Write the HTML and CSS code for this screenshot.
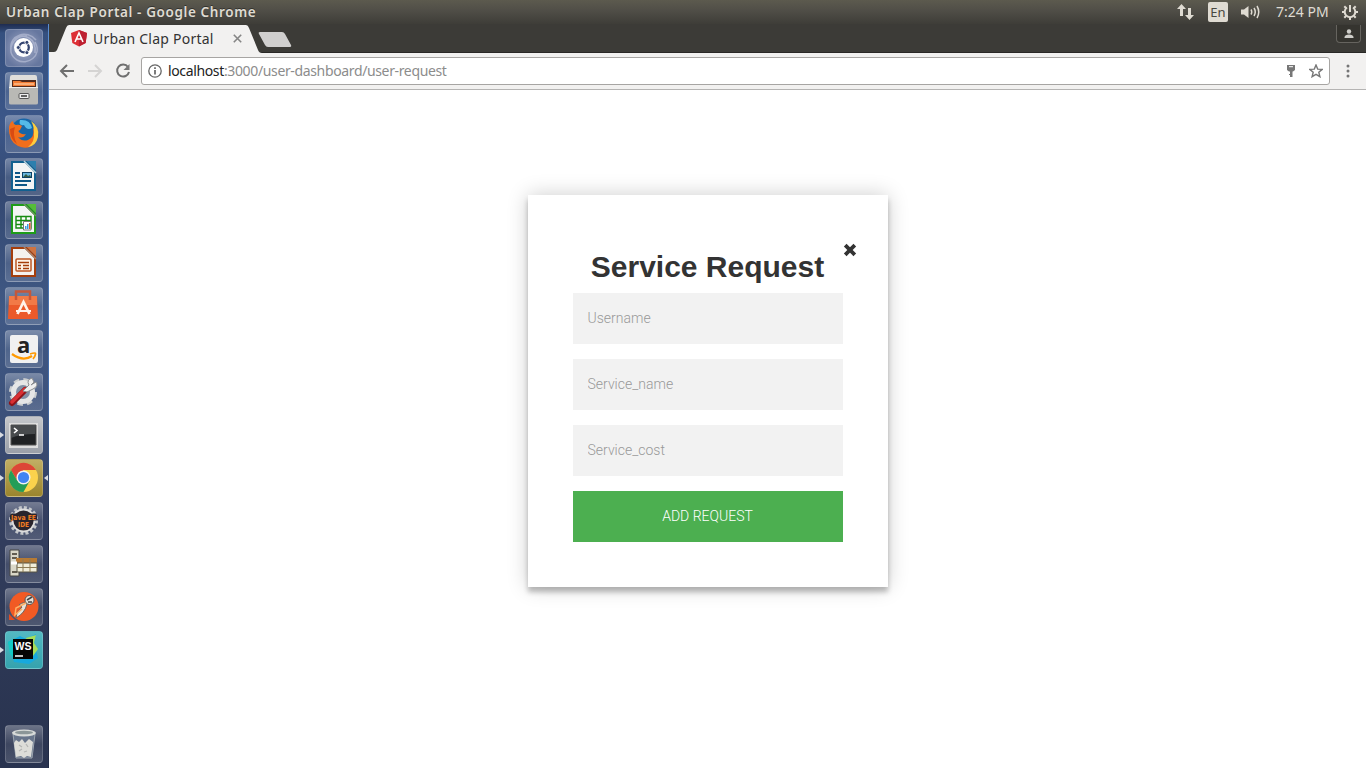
FILE: index.html
```html
<!DOCTYPE html>
<html lang="en">
<head>
<meta charset="utf-8">
<title>Urban Clap Portal</title>
<link rel="stylesheet" href="styles.css">
</head>
<body>
<div class="desktop">
  <header class="panel">
    <span class="panel-title">Urban Clap Portal - Google Chrome</span>
    <svg class="panel-icon arrows" width="20" height="18" viewBox="0 0 20 18"><path d="M5.500 1 10 6H7V13H4V6H1zM13.500 17 9 12H12V5H15V12H18z"/></svg>
    <span class="lang">En</span>
    <svg class="panel-icon sound" width="21" height="16" viewBox="0 0 21 16"><path d="M1 5.500H4L8.500 2V14L4 10.500H1z"/><path class="wave" d="M11 5.500Q12.500 8 11 10.500M14 4Q16.500 8 14 12M17 2Q20.500 8 17 14"/></svg>
    <span class="clock">7:24 PM</span>
    <svg class="panel-icon gear" width="18" height="18" viewBox="0 0 18 18"><path class="cog" d="M6 4.500A5.300 5.300 0 1 0 12 4.500"/><path class="cog" d="M9 2V9M1 9H4M14 9H17M3.300 3.300 5 5M14.700 3.300 13 5M3.300 14.700 5 13M14.700 14.700 13 13M9 14V17"/></svg>
  </header>
  <div class="workspace">
    <nav class="launcher">
      <div class="tile ubuntu"><svg viewBox="0 0 37 37"><path d="M6 20C4 6 22 0 31 11M12 31C-2 22 10 5 22 7M30 13C38 27 22 37 12 31M9 10C18 3 32 9 30 24" fill="none" stroke="#c4cbe0" stroke-width="1.500" opacity=".55"/><circle cx="18.500" cy="18.500" r="9.500" fill="#fff"/><circle cx="19" cy="18.500" r="4.800" fill="none" stroke="#344470" stroke-width="2.300"/><g fill="#344470" stroke="#fff" stroke-width=".9"><circle cx="13.300" cy="18.500" r="2"/><circle cx="21.900" cy="13.400" r="2"/><circle cx="21.900" cy="23.600" r="2"/></g></svg></div>
      <div class="tile"><svg viewBox="0 0 37 37"><path d="M5 5Q5 3 7 3H30Q32 3 32 5L33 17H4z" fill="#e0deda"/><path d="M7 8H31V15H7z" fill="#522b1d"/><path d="M8 9H15L17 10H30V14H8z" fill="#f37d35"/><path d="M9 12H29" stroke="#ffe0bc"/><path d="M4 15H33V31Q33 32.500 31 32.500H6Q4 32.500 4 31z" fill="#b9b9b5"/><path d="M4 15.500H33" stroke="#eee"/><rect x="14" y="21.500" width="10" height="5" rx="1" fill="#eee" stroke="#555"/><path d="M16 24H22" stroke="#333" stroke-width="1.500"/></svg></div>
      <div class="tile"><svg viewBox="0 0 37 37"><circle cx="19" cy="17" r="13.500" fill="#1766a8"/><path d="M15 5Q25 4 27 13Q22 16 19 10Q13 11 15 5z" fill="#55b9e7"/><path d="M4 12Q5 7 8 6Q8 9 11 10Q14 9 17 11L15 15Q12 16 15 18Q18 20 21 19Q18 24 13 22Q17 27 23 25Q30 22 28 13Q34 20 30 27Q24 36 13 31Q3 26 4 12z" fill="#f16e1b"/><path d="M26 6Q35 12 33 22Q31 31 23 32Q30 27 29 18Q29 11 26 6z" fill="#ffcc3d"/><path d="M5 14Q5 24 12 29Q7 20 10 12z" fill="#d94b12"/></svg></div>
      <div class="tile"><svg viewBox="0 0 37 37"><path d="M6 3H22L31 12V33H6z" fill="#12608f"/><path d="M8 5H20L29 14V31H8z" fill="#f4f5f5"/><path d="M22 3H31V12z" fill="#2d7fae"/><path d="M19 3 31 15" stroke="#b9d2de" stroke-width="1.500"/><path d="M10 15H15M10 19H15M10 23H26M10 27H22" stroke="#0d5787" stroke-width="2"/><rect x="17.500" y="14.500" width="9" height="5" fill="#6bb7df" stroke="#0d4265"/><path d="M18 19 21 16 23 18 25 17 26 19z" fill="#345b45"/></svg></div>
      <div class="tile"><svg viewBox="0 0 37 37"><path d="M6 3H22L31 12V33H6z" fill="#1e9c19"/><path d="M8 5H20L29 14V31H8z" fill="#f4f5f5"/><path d="M22 3H31V12z" fill="#55bd38"/><path d="M19 3 31 15" stroke="#6e9262" stroke-width="1.500"/><path d="M11 15.500H26V27H11zM11 19.500H26M11 23.500H26M16 15V27M21 15V27" fill="#fff" stroke="#168b12" stroke-width="1.400"/><path d="M18.500 20.500H26V29H18.500z" fill="#fff" stroke="#777"/><path d="M20 28V25H21.500V28M22 28V23H23.500V28" fill="#389be0"/><path d="M24 28V22H25.500V28z" fill="#e35c28"/></svg></div>
      <div class="tile"><svg viewBox="0 0 37 37"><path d="M6 3H22L31 12V33H6z" fill="#a53e0c"/><path d="M8 5H20L29 14V31H8z" fill="#f4f2ef"/><path d="M22 3H31V12z" fill="#cf7340"/><path d="M19 3 31 15" stroke="#a88672" stroke-width="1.500"/><rect x="11" y="15" width="15" height="12" rx="1" fill="#fff4e8" stroke="#bd5725" stroke-width="1.500"/><path d="M13 18.500H24M13 21.500H16M18 21.500H24M13 24.500H16M18 24.500H24" stroke="#a53e0c" stroke-width="1.700"/></svg></div>
      <div class="tile"><svg viewBox="0 0 37 37"><path d="M4 9H32L33 32H3z" fill="#eb5a2a"/><path d="M4 9H32V18H4z" fill="#f27a47"/><path d="M11 13V4.500H25V13" fill="none" stroke="#c5573a" stroke-width="2.500"/><path d="M12.500 27 18.500 15 24.500 27" fill="none" stroke="#fff2e9" stroke-width="2.700"/><path d="M11 24H26" stroke="#fff2e9" stroke-width="2"/></svg></div>
      <div class="tile"><svg viewBox="0 0 37 37"><rect x="5" y="5" width="28" height="28" rx="2" fill="#f1f1f1"/><text x="12" y="23" class="amazon">a</text><path d="M7 24Q18 32 27 26" fill="none" stroke="#ff9900" stroke-width="2.200"/><path d="M25 24Q31 22 30.500 24Q30 27 28 29" fill="none" stroke="#ff9900" stroke-width="1.700"/></svg></div>
      <div class="tile"><svg viewBox="0 0 37 37"><circle cx="18" cy="19" r="12" fill="none" stroke="#c9ccce" stroke-width="4" stroke-dasharray="5.420 4"/><circle cx="18" cy="19" r="9.500" fill="#8190a5" stroke="#e5e6e6" stroke-width="5"/><path d="M7 30 20 17" stroke="#8e1418" stroke-width="6" stroke-linecap="round"/><path d="M7 29 20 16" stroke="#d93034" stroke-width="3.500" stroke-linecap="round"/><path d="M18 18 24 12Q21 7 27 5L29 9 26 12 31 9Q34 13 28 16L22 19z" fill="#eee" stroke="#8a8d90"/></svg></div>
      <div class="tile terminal running"><svg viewBox="0 0 37 37"><path d="M4 7H33V32H4z" fill="#ddd"/><path d="M6 9H31V29H6z" fill="#202224" stroke="#555"/><path d="M6 9H31L30 18Q15 18 6 22z" fill="#484b4d"/><path d="M9 12 12 14.500 9 17M14 19H19" fill="none" stroke="#fff" stroke-width="1.600"/></svg></div>
      <div class="tile chrome running focused"><svg viewBox="0 0 37 37"><circle cx="18.500" cy="18.500" r="14.500" fill="#fbd24c"/><path d="M6 11A14.500 14.500 0 0 1 31 11H18.500L12.400 22z" fill="#dc4737"/><path d="M6 11A14.500 14.500 0 0 0 18.500 33L24.600 22H12.400z" fill="#249d58"/><circle cx="18.500" cy="18.500" r="7" fill="#f4f4f4"/><circle cx="18.500" cy="18.500" r="5.600" fill="#4184f3"/></svg></div>
      <div class="tile"><svg viewBox="0 0 37 37"><circle cx="18.500" cy="18.500" r="13" fill="none" stroke="#c3c6ca" stroke-width="3" stroke-dasharray="3 2.105"/><circle cx="18.500" cy="18.500" r="11" fill="#29242d" stroke="#ddd" stroke-width="1.800"/><rect x="5" y="11.500" width="27" height="7" rx="2" fill="#29242d"/><text x="6" y="17.500" class="java" textLength="25" lengthAdjust="spacingAndGlyphs">Java EE</text><text x="13" y="24.500" class="java" textLength="11" lengthAdjust="spacingAndGlyphs">IDE</text></svg></div>
      <div class="tile"><svg viewBox="0 0 37 37"><path d="M5 5H14V31H5z" fill="#dad8c8" stroke="#464743"/><path d="M7 9H12M7 13H12M7 27H12" stroke="#625d50" stroke-width="2"/><path d="M11 13H32V19H11z" fill="#b67a34"/><path d="M12 18H32V27H12z" fill="#f1eed9" stroke="#565343"/><path d="M12 22.500H32M18 14V27M25 14V27" stroke="#8d7c55"/><path d="M6 18H12" stroke="#fff" stroke-width="3"/></svg></div>
      <div class="tile"><svg viewBox="0 0 37 37"><circle cx="19" cy="18.500" r="14.500" fill="#f15a24"/><path d="M4 26 10 32H4z" fill="#e24b20"/><circle cx="24.500" cy="12" r="4.500" fill="#e5dfd7" stroke="#545454"/><path d="M22 12 27 9M23 14H27" stroke="#444" stroke-width="1.500"/><path d="M22 16Q20 25 11 30L12 25 17 19 14 17Q19 13 22 16z" fill="#e8e3da" stroke="#6d6560"/><path d="M21 15 11 20 10 27 17 21" fill="none" stroke="#ffb064" stroke-width="1.500"/></svg></div>
      <div class="tile webstorm running"><svg viewBox="0 0 37 37"><path d="M3 11 15 5 21 8 31 3 29 12 33 27 24 33 9 31z" fill="#17a9de"/><path d="M21 7 31 4 29 12 33 18 28 25z" fill="#a6dd58"/><path d="M3 11 11 7V30L5 23z" fill="#13c9c4"/><rect x="8" y="8" width="20" height="20" fill="#050505"/><text x="9.500" y="18.500" class="ws" textLength="17" lengthAdjust="spacingAndGlyphs">WS</text><path d="M10 25H18" stroke="#fff" stroke-width="1.500"/></svg></div>
      <div class="tile trash"><svg viewBox="0 0 37 37"><path d="M8 9H30L27 33H11z" fill="#68758b" stroke="#9da6b0"/><path d="M9 18 11 15 14 17 17 14 20 18 24 14 28 17 26 32 22 31 19 33 16 31 11 32z" fill="#ddddd8"/><path d="M14 20 17 22M14 26 17 24M21 19 23 22M19 27 22 26" fill="none" stroke="#b5b6b4" stroke-width="1.300"/><ellipse cx="19" cy="8" rx="12" ry="3.500" fill="#d7dad8"/><ellipse cx="19" cy="7.500" rx="9" ry="1.700" fill="#8b9698"/></svg></div>
    </nav>
    <section class="browser">
      <div class="tabs">
        <svg class="tab-shapes" width="250" height="29" viewBox="0 0 250 29"><path d="M0 29V28H5Q7 28 8 26L17 4Q18 1 20 1H197Q199 1 200 4L209 26Q210 29 213 29z" fill="#f2f1f0"/><path d="M211 8H233Q235 8 236 10L242 21Q243 23 240 23H219Q217 23 216 21L210 10Q209 8 211 8z" fill="#d0cfce"/></svg>
        <svg class="favicon" width="16" height="17" viewBox="0 0 16 17"><path d="M8 0 16 3 14.700 13 8 16.500 1.300 13 0 3z" fill="#dd2f36"/><path d="M8 0 16 3 14.700 13 8 16.500z" fill="#bd2031"/><path d="M4 12 8 3 12 12M5.500 9H10.500" fill="none" stroke="#fff" stroke-width="1.600"/></svg>
        <span class="tab-title">Urban Clap Portal</span>
        <svg class="tab-close" width="9" height="9" viewBox="0 0 9 9"><path d="M.8.8 8.200 8.200M8.200.8.800 8.200" stroke="#858585" stroke-width="1.600"/></svg>
        <div class="profile"><svg width="10" height="10" viewBox="0 0 10 10"><circle cx="5" cy="2.500" r="2.200" fill="#cfcec9"/><path d="M.5 9V8Q1 5.500 5 5.500T9.500 8V9z" fill="#cfcec9"/></svg></div>
      </div>
      <div class="toolbar">
        <svg class="nav-icon" width="16" height="16" viewBox="0 0 16 16"><path d="M15 8H2M8 2 2 8 8 14"/></svg>
        <svg class="nav-icon disabled" width="16" height="16" viewBox="0 0 16 16"><path d="M1 8H14M8 2 14 8 8 14"/></svg>
        <svg class="nav-icon" width="16" height="16" viewBox="0 0 16 16"><path d="M13 4A6 6 0 1 0 14 9"/><path d="M14.500 1V7H8.500z" fill="#777" stroke="none"/></svg>
        <div class="address">
          <svg width="14" height="14" viewBox="0 0 14 14"><circle cx="7" cy="7" r="6.200" fill="none" stroke="#666" stroke-width="1.300"/><path d="M7 6V10.500M7 3.300V5" stroke="#666" stroke-width="1.700"/></svg>
          <span class="url"><span class="host">localhost</span>:3000/user-dashboard/user-request</span>
          <svg class="key" width="10" height="13" viewBox="0 0 10 13"><path d="M1 0H9V5L7 6.500H6.500V12H4V10H3V9H4V6.500H3L1 5z" fill="#777"/><path d="M3 1.700H7" stroke="#fff"/></svg>
          <svg width="14" height="14" viewBox="0 0 14 14"><path d="M7 1 8.700 5.100 13.200 5.400 9.800 8.200 10.900 12.700 7 10.300 3.100 12.700 4.200 8.200.8 5.400 5.300 5.100z" fill="none" stroke="#777" stroke-width="1.400"/></svg>
        </div>
        <svg class="menu" width="4" height="14" viewBox="0 0 4 14"><g fill="#757575"><circle cx="2" cy="2" r="1.500"/><circle cx="2" cy="7" r="1.500"/><circle cx="2" cy="12" r="1.500"/></g></svg>
      </div>
      <main class="page">
        <form class="card">
          <svg class="card-close" width="14" height="14" viewBox="0 0 14 14"><path d="M2.200 2.200 11.800 11.800M11.800 2.200 2.200 11.800" stroke="#333" stroke-width="3.800"/></svg>
          <h2>Service Request</h2>
          <input type="text" placeholder="Username">
          <input type="text" placeholder="Service_name">
          <input type="text" placeholder="Service_cost">
          <button type="button">ADD REQUEST</button>
        </form>
      </main>
    </section>
  </div>
</div>
</body>
</html>
```
FILE: styles.css
```css
* { box-sizing: border-box; }
body { margin: 0; overflow: hidden; }
svg { display: block; flex: none; }
.desktop { width: 1366px; height: 768px; display: flex; flex-direction: column; font-family: "Noto Sans", sans-serif; }
.panel { height: 24px; display: flex; align-items: center; padding: 0 7px 0 6px; background: linear-gradient(#5c5a4e, #514f48 40%, #3e3d38); color: #dfdbd2; white-space: nowrap; }
.panel-title { width: 254px; font-size: 13.500px; font-weight: 600; letter-spacing: .62px; text-shadow: 0 -1px #33322e; }
.panel-icon { fill: #dfdbd2; }
.arrows { margin-left: auto; }
.lang { width: 20px; height: 20px; margin-left: 12px; border-radius: 2px; background: #dfdbd2; color: #484740; font-size: 13px; line-height: 20px; text-align: center; }
.sound { margin-left: 12px; }
.wave, .cog { fill: none; stroke: #dfdbd2; stroke-width: 1.500; }
.cog { stroke-width: 2; }
.clock { width: 53px; margin-left: 15px; padding-bottom: 2px; font-size: 14px; letter-spacing: 0; }
.gear { margin-left: 12px; }
.workspace { flex: 1; display: flex; min-height: 0; }
.launcher { width: 49px; padding: 5px 0 5px 5px; display: flex; flex-direction: column; gap: 5px; background: linear-gradient(#1e2c50 0, #35507f 9px, #3c5789 100px, #344972 170px, #405985 290px, #3b5079 400px, #343f60 480px, #2d3855 620px, #29334f 100%); border-right: 1px solid #456fae; border-image: linear-gradient(#5b8ed0, #4069a6 50%, #202a45 70%) 1; }
.tile { width: 38px; height: 38px; flex: none; position: relative; border: 1px solid #ffffff2b; border-radius: 4px; background: linear-gradient(#ffffff50, #ffffff18 50%, #ffffff28); }
.tile svg { width: 37px; height: 37px; margin: -1px; }
.ubuntu { background: radial-gradient(circle, #a4acc8, #66779f 80%); }
.terminal { background: linear-gradient(#c5c7ca, #9a9fa8); }
.chrome { background: linear-gradient(#c1ae64, #9b852d); }
.webstorm { background: linear-gradient(#53b9c2, #35a2ae); }
.trash { margin-top: auto; }
.running::before, .focused::after { content: ""; position: absolute; top: 15px; border: 3px solid transparent; }
.running::before { left: -6px; border-left: 4px solid #d9dce2; border-right: 0; }
.focused::after { right: -6px; border-right: 4px solid #d9dce2; border-left: 0; }
.amazon { font: 700 22px "Open Sans", sans-serif; fill: #222; }
.java { font: 700 7px "DejaVu Sans", sans-serif; fill: #f27c21; }
.ws { font: 700 11px "Liberation Sans", sans-serif; fill: #fff; }
.browser { flex: 1; display: flex; flex-direction: column; min-width: 0; }
.tabs { height: 29px; display: flex; align-items: center; padding: 0 5px 0 22px; position: relative; background: #3c3b37; border-bottom: 1px solid #292826; }
.tab-shapes { position: absolute; left: 0; top: 0; }
.favicon, .tab-title, .tab-close { position: relative; }
.favicon { margin-top: 1px; }
.tab-title { width: 140px; margin-left: 6px; color: #333; font-size: 14px; letter-spacing: .24px; white-space: nowrap; }
.tab-close { margin-top: 1px; }
.profile { width: 25px; height: 18px; margin: -8px 0 0 auto; display: flex; align-items: center; justify-content: center; border: 1px solid #66645f; border-top: 0; border-radius: 0 0 4px 4px; background: #35342f; }
.toolbar { height: 37px; display: flex; align-items: center; gap: 12px; padding: 0 16px 0 10px; background: #f2f1f0; border-bottom: 1px solid #b5b4b3; }
.nav-icon { fill: none; stroke: #6f6f6f; stroke-width: 2; }
.disabled { stroke: #d5d4d3; }
.address { height: 28px; flex: 1; margin-left: -2px; display: flex; align-items: center; padding: 0 6px; background: #fff; border: 1px solid #a7a5a3; border-radius: 3px; }
.url { margin-left: 6px; padding-bottom: 1px; color: #8c8c8c; font-size: 14px; letter-spacing: -.36px; white-space: nowrap; }
.host { color: #222; }
.key { margin: 0 13px 0 auto; }
.menu { margin-left: 4px; }
.page { flex: 1; display: flex; align-items: flex-start; justify-content: center; padding-top: 105px; background: #fff; }
.card { width: 360px; height: 392px; padding: 45px; display: flex; flex-direction: column; position: relative; background: #fff; box-shadow: 0 0 20px rgba(0, 0, 0, .2), 0 5px 5px rgba(0, 0, 0, .24); }
.card-close { position: absolute; left: 315px; top: 48px; }
.card h2 { margin: 10px 0; font: 700 30px/33px "Liberation Sans", sans-serif; color: #333; text-align: center; }
.card input, .card button { width: 270px; height: 51px; flex: none; margin: 0 0 15px; padding: 0 15px 2px; border: 0; border-radius: 0; font: 300 14px Roboto, sans-serif; }
.card input { background: #f2f2f2; }
.card input::placeholder { color: #999; opacity: 1; }
.card button { margin: 0; background: #4caf50; color: #fff; }
```
